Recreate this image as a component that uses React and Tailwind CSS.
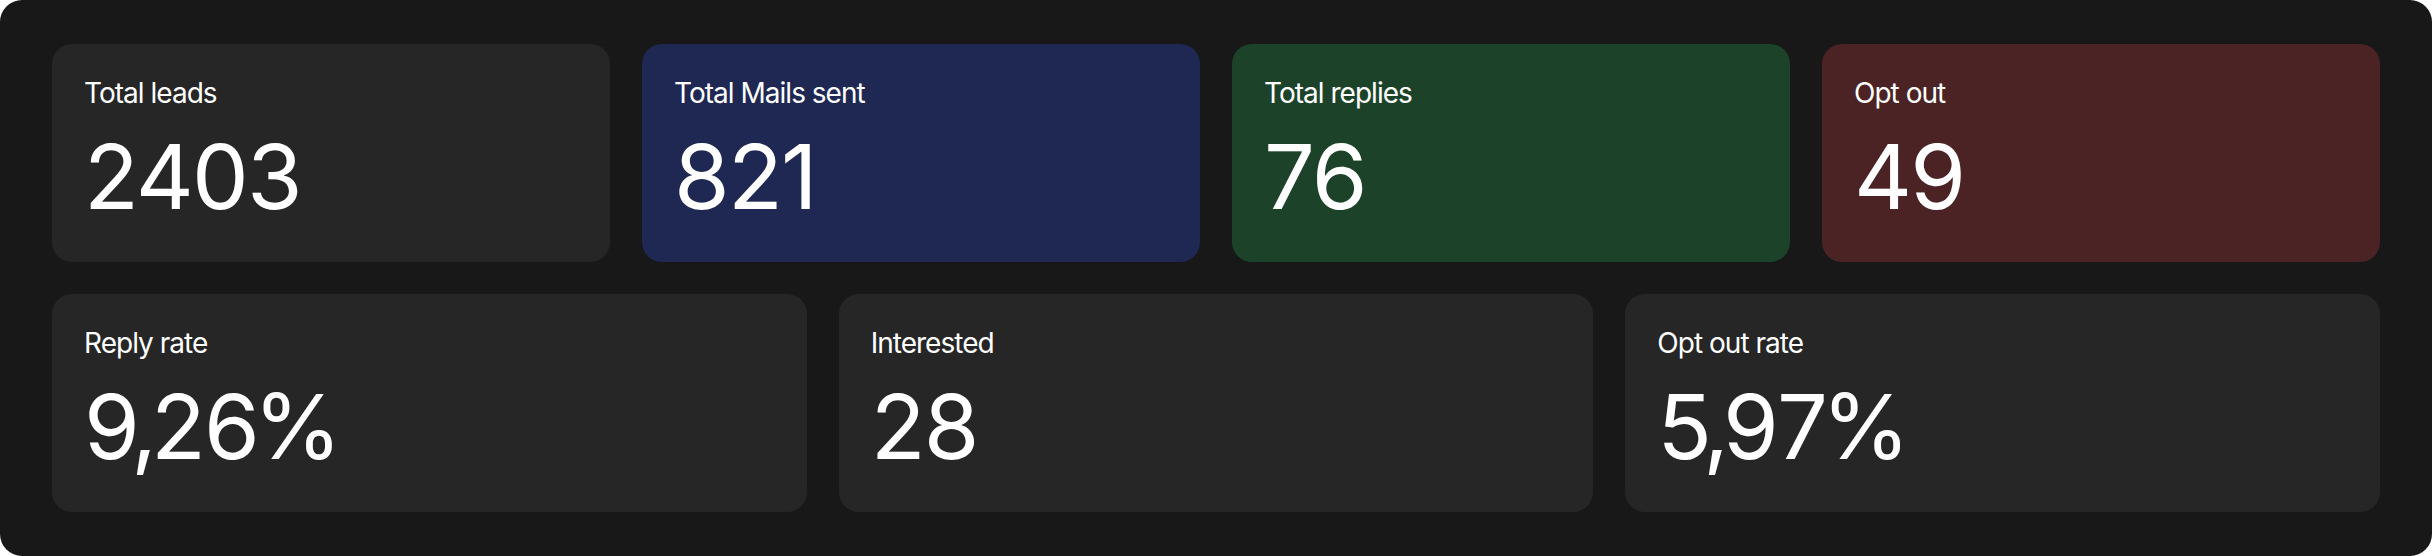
import React from 'react';

const topStats = [
  { label: 'Total leads', value: '2403', bg: 'bg-[#262626]' },
  { label: 'Total Mails sent', value: '821', bg: 'bg-[#1e2852]' },
  { label: 'Total replies', value: '76', bg: 'bg-[#1c432a]' },
  { label: 'Opt out', value: '49', bg: 'bg-[#4b2325]' },
];

const bottomStats = [
  { label: 'Reply rate', value: '9,26%', bg: 'bg-[#262626]' },
  { label: 'Interested', value: '28', bg: 'bg-[#262626]' },
  { label: 'Opt out rate', value: '5,97%', bg: 'bg-[#262626]' },
];

// tighten comma and percent a bit, Inter draws them wide
function Value({ text }) {
  return text.split('').map((ch, i) => {
    const next = text[i + 1];
    if (ch === ',' || next === ',' || next === '%') {
      return (
        <span key={i} className="tracking-[-0.07em]">
          {ch}
        </span>
      );
    }
    return <span key={i}>{ch}</span>;
  });
}

function StatCard({ label, value, bg }) {
  return (
    <div className={`${bg} h-[218px] rounded-[20px] px-8 pt-8 flex flex-col`}>
      <span className="text-[28px] leading-[34px] tracking-[-0.035em] text-white">{label}</span>
      <span className="mt-[22px] text-[90px] leading-[90px] tracking-[-0.02em] text-white">
        <Value text={value} />
      </span>
    </div>
  );
}

export default function App() {
  return (
    <div className="w-[2432px] h-[556px] bg-white" style={{ fontFamily: 'Inter, sans-serif' }}>
      <div className="h-full bg-[#181818] rounded-[22px] px-[52px] py-[44px] flex flex-col gap-8">
        <div className="grid grid-cols-4 gap-8">
          {topStats.map((s) => (
            <StatCard key={s.label} {...s} />
          ))}
        </div>
        <div className="grid grid-cols-3 gap-8">
          {bottomStats.map((s) => (
            <StatCard key={s.label} {...s} />
          ))}
        </div>
      </div>
    </div>
  );
}
